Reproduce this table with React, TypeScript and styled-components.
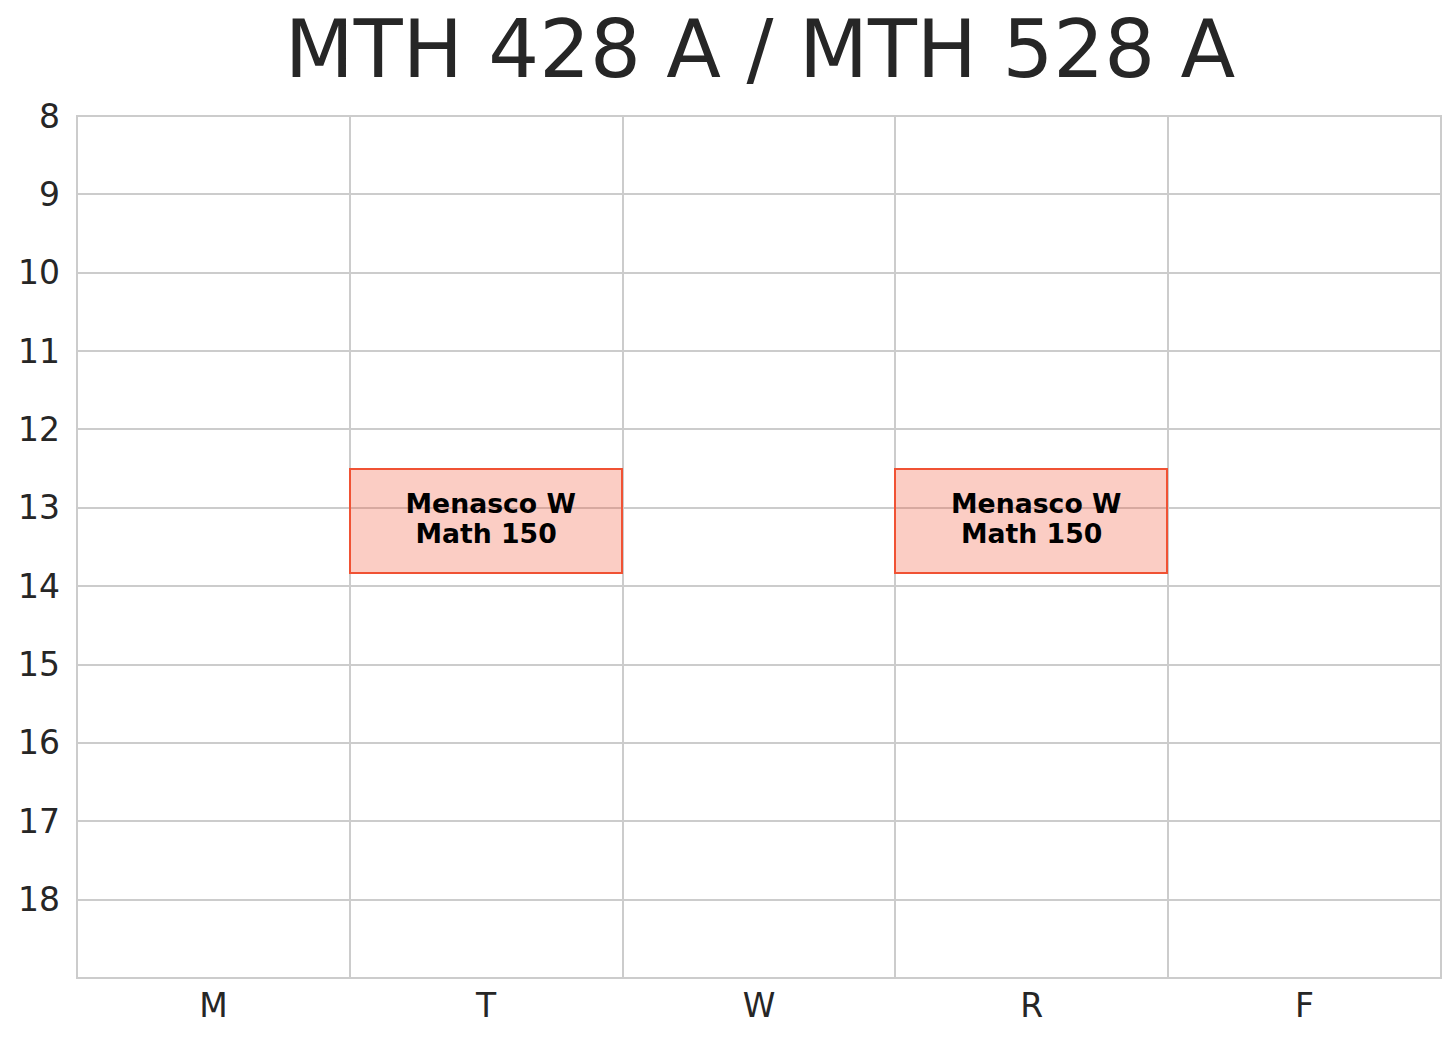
import React from "react";
import styled, { createGlobalStyle } from "styled-components";

const HOUR = 78.36;
const START_HOUR = 8;
const DAYS = ["M", "T", "W", "R", "F"];
const HOURS = [8, 9, 10, 11, 12, 13, 14, 15, 16, 17, 18];

type CalEvent = { day: number; start: number; end: number; lines: string };

const EVENTS: CalEvent[] = [
  { day: 1, start: 12.5, end: 13 + 50 / 60, lines: "Menasco W\nMath 150 " },
  { day: 3, start: 12.5, end: 13 + 50 / 60, lines: "Menasco W\nMath 150 " },
];

const GlobalStyle = createGlobalStyle`
  html, body {
    margin: 0;
    padding: 0;
    background: #ffffff;
  }
  body {
    font-family: "DejaVu Sans", "Liberation Sans", sans-serif;
    color: #262626;
  }
`;

const Page = styled.div`
  width: 1456px;
  height: 1040px;
  display: flex;
  flex-direction: column;
  overflow: hidden;
  background: #ffffff;
`;

const Title = styled.h1`
  margin: 3px 0 19px 78px;
  width: 1364px;
  height: 93px;
  font-family: "DejaVu Sans", sans-serif;
  font-weight: normal;
  font-size: 80px;
  line-height: 93px;
  text-align: center;
  color: #262626;
  white-space: nowrap;
`;

const ChartRow = styled.div`
  display: flex;
  align-items: flex-start;
`;

const YAxis = styled.div`
  width: 76px;
  margin-top: -38.18px;
  display: flex;
  flex-direction: column;
`;

const YTick = styled.div`
  height: ${HOUR}px;
  display: flex;
  align-items: center;
  justify-content: flex-end;
  padding-right: 16px;
  box-sizing: border-box;
  font-family: "DejaVu Sans", sans-serif;
  font-size: 33px;
  line-height: 33px;
  color: #262626;
`;

const Plot = styled.div`
  width: 1362px;
  height: 860px;
  border: 2px solid #cccccc;
  display: grid;
  grid-template-columns: 270.8px repeat(3, 272.8px) 1fr;
  background: #ffffff;
`;

const DayColumn = styled.div<{ $first: boolean }>`
  position: relative;
  display: grid;
  grid-template-rows: 76.36px repeat(9, ${HOUR}px) 1fr;
  border-left: ${(p) => (p.$first ? "none" : "2px solid #cccccc")};
`;

const HourCell = styled.div<{ $first: boolean }>`
  border-top: ${(p) => (p.$first ? "none" : "2px solid #cccccc")};
`;

const EventBox = styled.div`
  position: absolute;
  left: -2px;
  right: -1px;
  box-sizing: border-box;
  border: 2px solid rgb(240, 82, 52);
  background: rgba(240, 82, 52, 0.29);
  display: flex;
  align-items: center;
  justify-content: center;
  padding: 0 0 4px 10px;
  z-index: 1;
`;

const EventText = styled.div`
  white-space: pre;
  text-align: center;
  font-family: "DejaVu Sans", sans-serif;
  font-weight: bold;
  font-size: 26.7px;
  line-height: 30px;
  color: #000000;
`;

const XAxis = styled.div`
  margin: 7px 0 0 77px;
  width: 1364px;
  display: grid;
  grid-template-columns: repeat(5, 1fr);
`;

const XTick = styled.div`
  text-align: center;
  font-family: "DejaVu Sans", sans-serif;
  font-size: 33px;
  color: #262626;
`;

export default function App() {
  return (
    <Page>
      <GlobalStyle />
      <Title>MTH 428 A / MTH 528 A</Title>
      <ChartRow>
        <YAxis>
          {HOURS.map((h) => (
            <YTick key={h}>{h}</YTick>
          ))}
        </YAxis>
        <Plot>
          {DAYS.map((d, i) => (
            <DayColumn key={d} $first={i === 0}>
              {HOURS.map((h, j) => (
                <HourCell key={h} $first={j === 0} />
              ))}
              {EVENTS.filter((e) => e.day === i).map((e, k) => (
                <EventBox
                  key={k}
                  style={{
                    top: (e.start - START_HOUR) * HOUR - 2,
                    height: (e.end - e.start) * HOUR + 2,
                  }}
                >
                  <EventText>{e.lines}</EventText>
                </EventBox>
              ))}
            </DayColumn>
          ))}
        </Plot>
      </ChartRow>
      <XAxis>
        {DAYS.map((d) => (
          <XTick key={d}>{d}</XTick>
        ))}
      </XAxis>
    </Page>
  );
}
